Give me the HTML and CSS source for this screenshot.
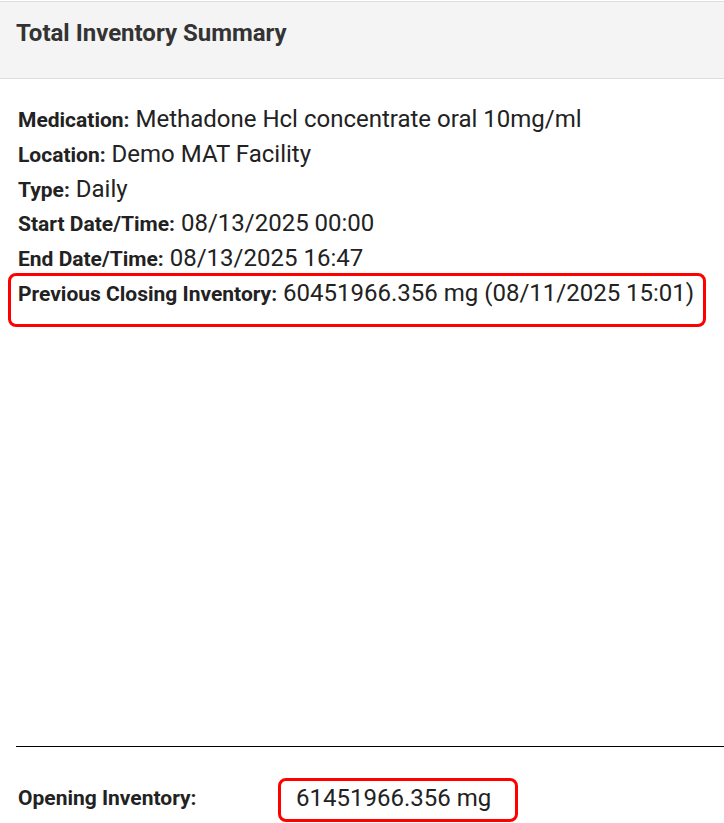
FILE: index.html
```html
<!DOCTYPE html>
<html lang="en">
<head>
  <meta charset="UTF-8">
  <meta name="viewport" content="width=device-width, initial-scale=1.0">
  <title>Total Inventory Summary</title>
  <link rel="stylesheet" href="styles.css">
</head>
<body>
  <div class="panel">
    <div class="panel-heading">Total Inventory Summary</div>

    <div class="panel-body">
      <!-- Summary details -->
      <div class="details">
        <div class="row"><b>Medication:</b> Methadone Hcl concentrate oral 10mg/ml</div>
        <div class="row"><b>Location:</b> Demo MAT Facility</div>
        <div class="row"><b>Type:</b> Daily</div>
        <div class="row"><b>Start Date/Time:</b> 08/13/2025 00:00</div>
        <div class="row"><b>End Date/Time:</b> 08/13/2025 16:47</div>
        <div class="row highlight"><b>Previous Closing Inventory:</b> 60451966.356 mg (08/11/2025 15:01)</div>
      </div>

      <hr class="divider">

      <!-- Opening inventory -->
      <div class="opening">
        <b class="opening-label">Opening Inventory:</b>
        <span class="opening-value highlight">61451966.356 mg</span>
      </div>
    </div>
  </div>
</body>
</html>
```

FILE: styles.css
```css
body {
  font-family: Roboto, Arial, sans-serif;
  color: #222;
  background-color: #fff;
  margin: 0;
  padding: 0;
}
.panel {
  height: 823px;
  overflow: hidden;
}
.panel-heading {
  margin-top: 1px;
  height: 76px;
  line-height: 63px;
  padding: 0 16px;
  font-size: 24px;
  font-weight: bold;
  color: #333;
  background-color: #f4f4f4;
  border-top: 1px solid #ddd;
  border-bottom: 1px solid #ddd;
}
.panel-body {
  padding: 24px 0 0 16px;
}
.details {
  height: 643px;
}
.row {
  font-size: 24px;
  line-height: 33.8px;
  padding-left: 2px;
  white-space: nowrap;
}
.row b {
  font-size: 21px;
}
.highlight {
  position: relative;
}
.highlight::after {
  content: "";
  position: absolute;
  border: 3px solid #ff0000;
  border-radius: 8px;
  pointer-events: none;
}
.row.highlight::after {
  left: -8px;
  right: 18px;
  top: -4px;
  bottom: -15px;
}
.divider {
  border: none;
  border-top: 1px solid #000;
  margin: 0;
}
.opening {
  display: flex;
  align-items: center;
  height: 33.8px;
  padding: 34px 0 0 2px;
}
.opening-label {
  width: 278px;
  flex-shrink: 0;
  font-size: 21px;
}
.opening-value {
  font-size: 24px;
}
.opening-value::after {
  left: -18px;
  right: -27px;
  top: -6px;
  bottom: -10px;
}
```
